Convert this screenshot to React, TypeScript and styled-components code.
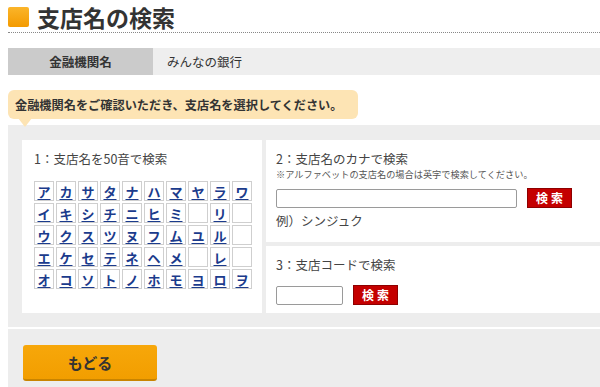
import React from 'react';
import styled, { createGlobalStyle } from 'styled-components';

const GlobalStyle = createGlobalStyle`
    html, body {
        margin: 0;
        padding: 0;
        background: #fff;
        overflow: hidden;
    }
    body {
        font-family: "Noto Sans CJK JP", "Noto Sans", sans-serif;
        color: #333;
    }
`

const Page = styled.div`
    width: 600px;
    padding-left: 8px;
    box-sizing: border-box;
`

const TitleBar = styled.div`
    display: flex;
    align-items: flex-start;
    gap: 8px;
    height: 33px;
    padding-top: 5px;
    border-bottom: 1px dotted #888;
    box-sizing: border-box;
`

const TitleMark = styled.span`
    width: 21px;
    height: 20px;
    margin-top: 2px;
    border-radius: 2px;
    background: linear-gradient(#fbb52a, #f39a00);
`

const Title = styled.h1`
    margin: 0;
    font-size: 23px;
    font-weight: bold;
    line-height: 24px;
    color: #333;
`

const BankRow = styled.div`
    display: flex;
    height: 27px;
    margin-top: 15px;
    font-size: 12.5px;
`

const BankLabel = styled.div`
    width: 145px;
    display: flex;
    align-items: center;
    justify-content: center;
    background: #cbcbcb;
    font-weight: bold;
`

const BankValue = styled.div`
    flex: 1;
    display: flex;
    align-items: center;
    padding-left: 14px;
    background: #eeeeee;
`

const Bubble = styled.div`
    position: relative;
    width: 350px;
    height: 29px;
    margin-top: 15px;
    padding-left: 7px;
    box-sizing: border-box;
    display: flex;
    align-items: center;
    background: #fde4b4;
    border-radius: 6px;
    font-size: 12.2px;
    font-weight: bold;
    z-index: 1;

    &::after {
        content: '';
        position: absolute;
        left: 10px;
        bottom: -8px;
        border-left: 7px solid transparent;
        border-right: 7px solid transparent;
        border-top: 9px solid #fde4b4;
    }
`

const Panel = styled.div`
    display: flex;
    gap: 4px;
    margin-top: 6px;
    padding: 15px 0 14px 14px;
    background: #ededed;
`

const Box = styled.div`
    background: #fff;
    box-sizing: border-box;
`

const KanaBox = styled(Box)`
    width: 240px;
    height: 173px;
    padding: 10px 0 0 12px;
`

const RightColumn = styled.div`
    flex: 1;
    display: flex;
    flex-direction: column;
    gap: 4px;
`

const SearchBox = styled(Box)<{ h: number }>`
    height: ${props => props.h}px;
    padding: 10px 0 0 10px;
`

const Heading = styled.div`
    font-size: 12.5px;
    line-height: 17px;
    color: #444;
`

const Note = styled.div`
    margin-top: 1px;
    font-size: 9.2px;
    line-height: 12px;
    color: #555;
`

const KanaGrid = styled.div`
    display: grid;
    grid-template-columns: repeat(10, 20px);
    grid-auto-rows: 20px;
    gap: 2px;
    margin-top: 14px;
`

const KanaCell = styled.a<{ empty?: boolean }>`
    display: flex;
    align-items: center;
    justify-content: center;
    box-sizing: border-box;
    border: 1px solid #cfcfcf;
    background: #fff;
    font-size: 13px;
    font-weight: bold;
    color: #1b3b8c;
    text-decoration: ${props => props.empty ? 'none' : 'underline'};
    text-underline-offset: 2px;
    cursor: ${props => props.empty ? 'default' : 'pointer'};
`

const FieldRow = styled.div<{ top: number }>`
    display: flex;
    align-items: center;
    gap: 10px;
    margin-top: ${props => props.top}px;
`

const TextInput = styled.input<{ w: number }>`
    width: ${props => props.w}px;
    height: 19px;
    box-sizing: border-box;
    border: 1px solid #9a9a9a;
    border-radius: 2px;
    padding: 0 4px;
    font-size: 12px;
`

const RedButton = styled.button`
    width: 45px;
    height: 20px;
    padding: 0;
    border: 1px solid #8e0000;
    background: #c40000;
    color: #fff;
    font-family: "Noto Sans CJK JP", sans-serif;
    font-size: 12px;
    font-weight: bold;
    letter-spacing: 3px;
    text-indent: 3px;
    line-height: 1;
    cursor: pointer;
`

const Example = styled.div`
    margin-top: 3px;
    font-size: 12.5px;
    color: #444;
`

const Footer = styled.div`
    margin-top: 2px;
    height: 58px;
    padding: 16px 0 0 15px;
    box-sizing: border-box;
    background: #ededed;
`

const BackButton = styled.button`
    width: 134px;
    height: 36px;
    border: none;
    border-bottom: 2px solid #c98400;
    border-radius: 3px;
    background: linear-gradient(#f7a70a, #f29e00);
    font-family: "Noto Sans CJK JP", sans-serif;
    font-size: 15px;
    font-weight: bold;
    color: #333;
    cursor: pointer;
`

const kanaRows: string[][] = [
    ['ア', 'カ', 'サ', 'タ', 'ナ', 'ハ', 'マ', 'ヤ', 'ラ', 'ワ'],
    ['イ', 'キ', 'シ', 'チ', 'ニ', 'ヒ', 'ミ', '', 'リ', ''],
    ['ウ', 'ク', 'ス', 'ツ', 'ヌ', 'フ', 'ム', 'ユ', 'ル', ''],
    ['エ', 'ケ', 'セ', 'テ', 'ネ', 'ヘ', 'メ', '', 'レ', ''],
    ['オ', 'コ', 'ソ', 'ト', 'ノ', 'ホ', 'モ', 'ヨ', 'ロ', 'ヲ'],
]

export default function App() {
    return (
        <Page>
            <GlobalStyle />
            <TitleBar>
                <TitleMark />
                <Title>支店名の検索</Title>
            </TitleBar>

            <BankRow>
                <BankLabel>金融機関名</BankLabel>
                <BankValue>みんなの銀行</BankValue>
            </BankRow>

            <Bubble>金融機関名をご確認いただき、支店名を選択してください。</Bubble>

            <Panel>
                <KanaBox>
                    <Heading>1：支店名を50音で検索</Heading>
                    <KanaGrid>
                        {kanaRows.flat().map((kana, i) => (
                            <KanaCell key={i} empty={!kana}>{kana}</KanaCell>
                        ))}
                    </KanaGrid>
                </KanaBox>

                <RightColumn>
                    <SearchBox h={102}>
                        <Heading>2：支店名のカナで検索</Heading>
                        <Note>※アルファベットの支店名の場合は英字で検索してください。</Note>
                        <FieldRow top={8}>
                            <TextInput w={241} />
                            <RedButton>検索</RedButton>
                        </FieldRow>
                        <Example>例）シンジュク</Example>
                    </SearchBox>
                    <SearchBox h={67}>
                        <Heading>3：支店コードで検索</Heading>
                        <FieldRow top={12}>
                            <TextInput w={67} />
                            <RedButton>検索</RedButton>
                        </FieldRow>
                    </SearchBox>
                </RightColumn>
            </Panel>

            <Footer>
                <BackButton>もどる</BackButton>
            </Footer>
        </Page>
    )
}
